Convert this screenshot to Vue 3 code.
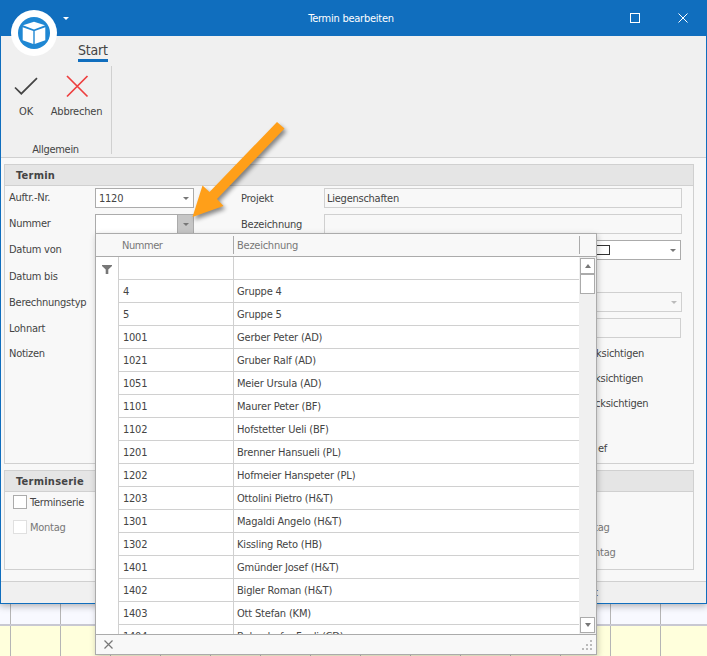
<script setup>
const leftFields = [
  { label: 'Auftr.-Nr.', combo: true, value: '1120' },
  { label: 'Nummer', combo: true, value: '', open: true },
  { label: 'Datum von' },
  { label: 'Datum bis', low: true },
  { label: 'Berechnungstyp', low: true },
  { label: 'Lohnart', low: true },
  { label: 'Notizen' },
]

const rows = [
  ['4', 'Gruppe 4'],
  ['5', 'Gruppe 5'],
  ['1001', 'Gerber Peter (AD)'],
  ['1021', 'Gruber Ralf (AD)'],
  ['1051', 'Meier Ursula (AD)'],
  ['1101', 'Maurer Peter (BF)'],
  ['1102', 'Hofstetter Ueli (BF)'],
  ['1201', 'Brenner Hansueli (PL)'],
  ['1202', 'Hofmeier Hanspeter (PL)'],
  ['1203', 'Ottolini Pietro (H&T)'],
  ['1301', 'Magaldi Angelo (H&T)'],
  ['1302', 'Kissling Reto (HB)'],
  ['1401', 'Gmünder Josef (H&T)'],
  ['1402', 'Bigler Roman (H&T)'],
  ['1403', 'Ott Stefan (KM)'],
  ['1404', 'Bolendorfer Fredi (CD)'],
]
</script>

<template>
  <div class="screen">
    <div class="window">
      <header class="titlebar">
        <i class="quick-caret"></i>
        <span class="title">Termin bearbeiten</span>
        <svg class="win-buttons" width="72" height="36" viewBox="0 0 72 36">
          <rect x="10.5" y="13.5" width="9" height="9" />
          <path d="M58.5 13.5l9 9M67.5 13.5l-9 9" />
        </svg>
      </header>
      <svg class="app-logo" width="46" height="46" viewBox="0 0 46 46">
        <circle cx="23" cy="23" r="23" fill="#fff" />
        <circle cx="23" cy="23" r="16" fill="#1f87d3" />
        <path fill="#fff" d="M23 11.8 34 15.3 23 19.4 12 15.3zM11.7 17.2 22.3 21v12.9L11.7 30.2zM34.3 17.2 23.7 21v12.9L34.3 30.2z" />
      </svg>

      <section class="ribbon">
        <div class="tabs"><span class="tab">Start</span></div>
        <div class="ribbon-group">
          <div class="actions">
            <div class="action ok">
              <svg width="26" height="26" viewBox="0 0 26 26"><path d="M2 14.5l6.300 6.200L24 5.200" fill="none" stroke="#444" stroke-width="1.7" /></svg>
              <span>OK</span>
            </div>
            <div class="action cancel">
              <svg width="26" height="26" viewBox="0 0 26 26"><path d="M3 3l20.500 20.500M23.500 3L3 23.500" fill="none" stroke="#ee3e3e" stroke-width="1.7" /></svg>
              <span>Abbrechen</span>
            </div>
          </div>
          <div class="caption">Allgemein</div>
        </div>
      </section>

      <main class="content">
        <section class="group termin">
          <h2>Termin</h2>
          <div class="form">
            <div class="col-left">
              <div v-for="f in leftFields" :key="f.label" class="row">
                <label :class="{ low: f.low }">{{ f.label }}</label>
                <div v-if="f.combo" class="field combo" :class="{ open: f.open }">
                  <span>{{ f.value }}</span><b class="drop"><i class="caret"></i></b>
                </div>
              </div>
            </div>
            <div class="col-right">
              <div class="row"><label>Projekt</label><div class="field readonly">Liegenschaften</div></div>
              <div class="row"><label>Bezeichnung</label><div class="field readonly"></div></div>
              <div class="row side"><div class="field combo color"><em class="swatch"></em><b class="drop"><i class="caret"></i></b></div></div>
              <div class="row"></div>
              <div class="row side"><div class="field combo readonly wide"><span></span><b class="drop"><i class="caret dim"></i></b></div></div>
              <div class="row side"><div class="field readonly"></div></div>
              <div class="options">
                <span class="o1">ksichtigen</span>
                <span class="o2">ksichtigen</span>
                <span class="o3">cksichtigen</span>
                <span class="o4">ef</span>
              </div>
            </div>
          </div>
        </section>

        <section class="group serie">
          <h2>Terminserie</h2>
          <div class="serie-body">
            <div class="checks">
              <div class="check"><i class="box"></i>Terminserie</div>
              <div class="check off"><i class="box"></i>Montag</div>
            </div>
            <div class="days"><span class="d1">tag</span><span class="d2">ntag</span></div>
          </div>
        </section>
      </main>
      <footer class="status"><span>t</span></footer>
    </div>

    <div class="calendar"><div class="band cool"></div><div class="band warm"></div></div>

    <div class="popup">
      <div class="head">
        <span class="gutter"></span><span class="c1">Nummer</span><span class="c2">Bezeichnung</span><span class="c3"></span>
      </div>
      <div class="grid">
        <div class="gutter">
          <svg width="10" height="9" viewBox="0 0 10 9"><path d="M0 0h10v1L6.300 4.600V9H3.700V4.600L0 1z" fill="#777" /></svg>
        </div>
        <div class="rows">
          <div class="line"><span class="c1"></span><span class="c2"></span></div>
          <div v-for="r in rows" :key="r[0]" class="line"><span class="c1">{{ r[0] }}</span><span class="c2">{{ r[1] }}</span></div>
        </div>
        <div class="scroll">
          <b class="btn"><i class="caret up"></i></b>
          <b class="thumb"></b>
          <b class="btn last"><i class="caret down"></i></b>
        </div>
      </div>
      <div class="foot">
        <svg width="9" height="9" viewBox="0 0 9 9"><path d="M.5.5l8 8M8.500.5l-8 8" stroke="#777" stroke-width="1.200" /></svg>
        <svg width="12" height="12" viewBox="0 0 12 12" fill="#bbb"><path d="M9 1h2v2H9zM5 5h2v2H5zM9 5h2v2H9zM1 9h2v2H1zM5 9h2v2H5zM9 9h2v2H9z" /></svg>
      </div>
    </div>

    <svg class="arrow" width="110" height="110" viewBox="0 0 110 110">
      <path d="M7.500 107L17.500 75.500 24.500 82 92 12 99.500 18.500 32 89 38.500 96z" fill="#ff9f19" />
    </svg>
  </div>
</template>

<style>
body { margin: 0; }
</style>

<style scoped>
* { box-sizing: border-box; }
.screen {
  position: relative; width: 707px; height: 656px; overflow: hidden;
  font: 11px/14px "DejaVu Sans Condensed", "DejaVu Sans", sans-serif;
  font-stretch: condensed; letter-spacing: -0.25px; color: #444; white-space: nowrap;
}
.window {
  position: relative; z-index: 1; display: flex; flex-direction: column; height: 604px;
  border: 1px solid #106ebe; border-top: 0; background: #f8f8f8; box-shadow: 0 2px 7px rgba(0,0,0,.3);
}
.titlebar { display: flex; align-items: center; height: 36px; margin: 0 -1px; background: #106ebe; color: #fff; flex: none; }
.quick-caret { width: 0; border: 3px solid transparent; border-top-color: #fff; border-bottom: 0; margin-left: 63px; }
.title { flex: 1; text-align: center; padding: 1px 0 0 8px; }
.win-buttons { margin-right: 15px; fill: none; stroke: #fff; margin-left: -5px; }
.app-logo { position: absolute; left: 10px; top: 10px; }
.ribbon { height: 122px; background: #f0f0f0; border-bottom: 1px solid #d0d0d0; flex: none; }
.tabs { display: flex; height: 30px; padding: 5px 0 0 77px; }
.tab { width: 30px; height: 21px; border-bottom: 3px solid #106ebe; font-size: 14px; line-height: 18px; letter-spacing: -.2px; }
.ribbon-group { width: 111px; height: 88px; border-right: 1px solid #d0d0d0; display: flex; flex-direction: column; justify-content: space-between; }
.actions { display: flex; padding-top: 7px; }
.action { display: flex; flex-direction: column; align-items: center; gap: 6px; }
.ok { width: 50px; }
.cancel { width: 52px; }
.cancel span { margin-left: -1px; letter-spacing: -.2px; }
.caption { text-align: center; line-height: 12px; margin: 0 1px -2px 0; position: relative; letter-spacing: -.3px; }
.content { flex: 1; padding: 6px 12px 0 3px; }
.group { border: 1px solid #d0d0d0; width: 690px; }
.termin { height: 300px; }
.serie { height: 100px; margin-top: 6px; }
h2 { margin: 0; height: 21px; padding-left: 11px; border-bottom: 1px solid #d0d0d0; background: #e5e5e5; font-size: 11px; line-height: 21px; font-weight: bold; letter-spacing: .25px; }
.form { display: flex; gap: 47px; padding-top: 2px; }
.col-left, .col-right { display: flex; flex-direction: column; gap: 6px; }
.row { display: flex; height: 20px; align-items: center; }
.col-left label { width: 90px; padding-left: 4px; }
.col-left .low { padding-top: 2px; }
.col-right label { width: 83px; padding-top: 1px; }
.field { height: 20px; border: 1px solid #d0d0d0; line-height: 19px; padding-left: 3px; }
.col-right .readonly { width: 358px; padding-left: 2px; }
.col-left .combo { width: 99px; }
.combo { display: flex; justify-content: space-between; background: #fff; border-color: #ababab; }
.drop { width: 15px; display: flex; align-items: center; justify-content: center; }
.open .drop { background: #c6c6c6; border-left: 1px solid #ababab; width: 16px; }
.caret { width: 0; height: 0; border: 3px solid transparent; border-top-color: #777; border-bottom: 0; }
.caret.up { border-top: 0; border-bottom: 4px solid #777; }
.caret.down { border-top-width: 4px; }
.caret.dim { border-top-color: #bbb; }
.side { padding-left: 319px; }
.col-right .side .field { width: 121px; }
.col-right .side .wide { width: 122px; background: #f8f8f8; border-color: #d0d0d0; }
.color { padding-left: 0; }
.swatch { width: 49px; height: 10px; margin-top: 4px; border: 1px solid #333; }
.options { display: flex; flex-direction: column; padding-left: 355px; }
.options span { height: 25px; line-height: 19px; }
.options .o2, .options .o3 { margin-left: -1px; }
.options .o3 { height: 45px; }
.options .o4 { margin-left: 2px; }
.serie-body { display: flex; }
.checks { width: 591px; padding: 3px 0 0 8px; }
.check { height: 25px; display: flex; gap: 3px; line-height: 15px; }
.box { width: 14px; height: 14px; border: 1px solid #ababab; background: #fff; }
.off { color: #777; }
.off .box { border-color: #e0e0e0; }
.days { display: flex; flex-direction: column; padding-top: 29px; color: #777; }
.days span { height: 25px; }
.days .d1, .days .d2 { margin-left: -2px; }
.status { height: 22px; background: #f0f0f0; border-top: 1px solid #d0d0d0; padding-left: 593px; line-height: 21px; flex: none; color: #222; }
.calendar { height: 52px; }
.band { background: repeating-linear-gradient(90deg, transparent 0 49px, #b5b5b5 49px 50px) -39px 0 / 800px 100% no-repeat #f8f9ff; }
.cool { height: 22px; border-bottom: 2px solid #c8c8d2; }
.warm { height: 30px; background-color: #ffffdc; }
.popup {
  position: absolute; z-index: 3; left: 95px; top: 233px; width: 502px; height: 422px;
  border: 1px solid #ababab; background: #fff; box-shadow: 1px 2px 6px rgba(0,0,0,.22); display: flex; flex-direction: column;
}
.head { display: flex; height: 23px; align-items: center; background: #f8f8f8; border-bottom: 1px solid #ababab; color: #777; flex: none; }
.head span { height: 18px; line-height: 19px; }
.head .gutter { width: 22px; }
.head .c1 { width: 115px; padding-left: 4px; letter-spacing: -.45px; }
.head .c2 { width: 346px; border-left: 1px solid #ababab; padding-left: 3px; }
.head .c3 { border-left: 1px solid #ababab; }
.grid { display: flex; height: 377px; overflow: hidden; flex: none; }
.grid .gutter { width: 22px; padding: 7px 0 0 6px; }
.rows { width: 461px; border-left: 1px solid #d0d0d0; }
.line { display: flex; height: 23px; line-height: 23px; border-bottom: 1px solid #d0d0d0; }
.line .c1 { width: 114px; padding-left: 4px; }
.line .c2 { flex: 1; border-left: 1px solid #d0d0d0; padding-left: 3px; height: 23px; letter-spacing: -.18px; }
.scroll { width: 17px; background: #f0f0f0; padding: 1px 1px; display: flex; flex-direction: column; }
.btn, .thumb { width: 15px; height: 16px; border: 1px solid #ababab; background: #fff; display: flex; align-items: center; justify-content: center; }
.thumb { height: 20px; }
.last { margin-top: auto; }
.foot { flex: 1; background: #f8f8f8; border-top: 1px solid #ababab; display: flex; align-items: center; justify-content: space-between; padding: 0 3px 0 8px; }
.arrow { position: absolute; z-index: 4; left: 185px; top: 110px; overflow: visible; filter: drop-shadow(2px 3px 2px rgba(0,0,0,.45)); }
</style>
